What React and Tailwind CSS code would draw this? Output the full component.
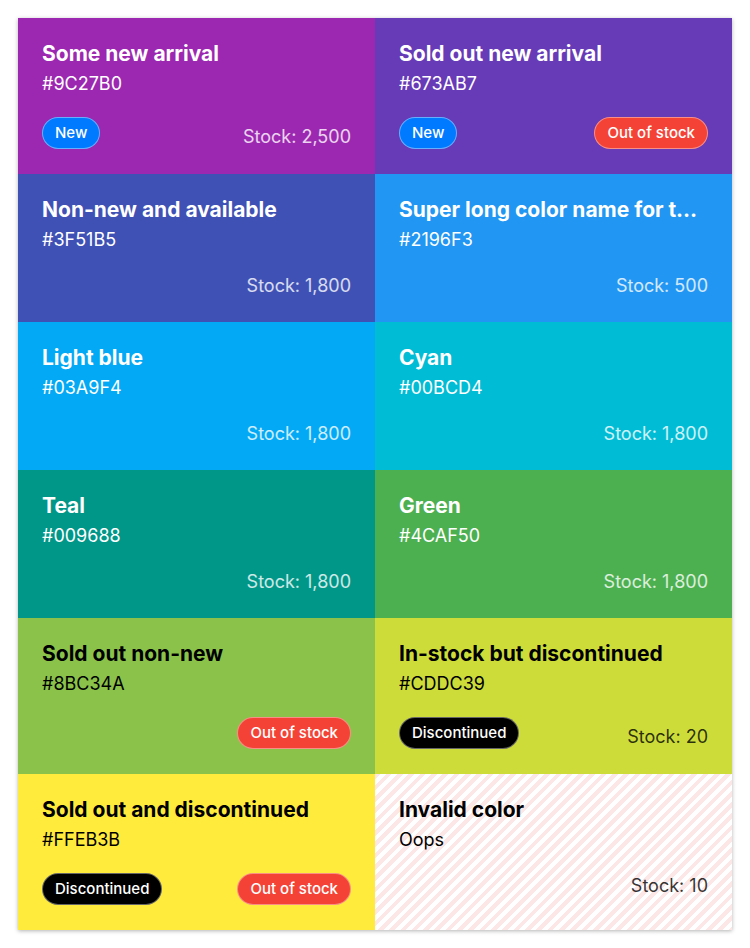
const colors = [
    { name: 'Some new arrival', hex: '#9C27B0', stock: 2500, isNew: true },
    { name: 'Sold out new arrival', hex: '#673AB7', stock: 0, isNew: true },
    { name: 'Non-new and available', hex: '#3F51B5', stock: 1800 },
    { name: 'Super long color name for testing text overflow', hex: '#2196F3', stock: 500 },
    { name: 'Light blue', hex: '#03A9F4', stock: 1800 },
    { name: 'Cyan', hex: '#00BCD4', stock: 1800 },
    { name: 'Teal', hex: '#009688', stock: 1800 },
    { name: 'Green', hex: '#4CAF50', stock: 1800 },
    { name: 'Sold out non-new', hex: '#8BC34A', stock: 0, light: true },
    { name: 'In-stock but discontinued', hex: '#CDDC39', stock: 20, light: true, discontinued: true },
    { name: 'Sold out and discontinued', hex: '#FFEB3B', stock: 0, light: true, discontinued: true },
    { name: 'Invalid color', hex: 'Oops', stock: 10, light: true, invalid: true },
];

const Badge = ({ className, children }) => (
    <span className={`inline-block rounded-full border border-white/40 px-3 py-[5px] text-[15px] leading-5 font-medium text-white ${className}`}>
        {children}
    </span>
);

const ColorCard = ({ color }) => {
    const textColor = color.light ? 'text-black' : 'text-white';
    const stockColor = color.light ? 'text-black/80' : 'text-white/80';
    const hasBadges = color.isNew || color.discontinued || color.stock === 0;

    return (
        <div
            className={`min-w-0 px-6 pt-6 ${hasBadges ? 'pb-[25px]' : 'pb-6'} ${textColor} ${color.invalid ? 'bg-[repeating-linear-gradient(135deg,#fce6e6_0px,#fce6e6_4px,#ffffff_4px,#ffffff_8px)]' : ''}`}
            style={color.invalid ? undefined : { backgroundColor: color.hex }}
        >
            <h3 className="truncate text-[21px] leading-6 font-bold">{color.name}</h3>
            <div className="mt-1 text-[18px] leading-[27px]">{color.hex}</div>
            <div className="mt-5 flex items-end">
                <div className="flex gap-2">
                    {color.isNew && <Badge className="bg-[#007aff]">New</Badge>}
                    {color.discontinued && <Badge className="bg-black">Discontinued</Badge>}
                </div>
                <div className="ml-auto">
                    {color.stock > 0 ? (
                        <span className={`block text-[18px] leading-[25px] ${stockColor}`}>
                            Stock: {color.stock.toLocaleString('en-US')}
                        </span>
                    ) : (
                        <Badge className="bg-[#f44336]">Out of stock</Badge>
                    )}
                </div>
            </div>
        </div>
    );
};

export default function App() {
    return (
        <div className="bg-white p-[18px] font-['Inter','Noto_Sans',sans-serif]">
            <div className="grid grid-cols-2 shadow-[0_1px_4px_rgba(0,0,0,0.3)]">
                {colors.map(c => <ColorCard key={c.name} color={c} />)}
            </div>
        </div>
    );
}
